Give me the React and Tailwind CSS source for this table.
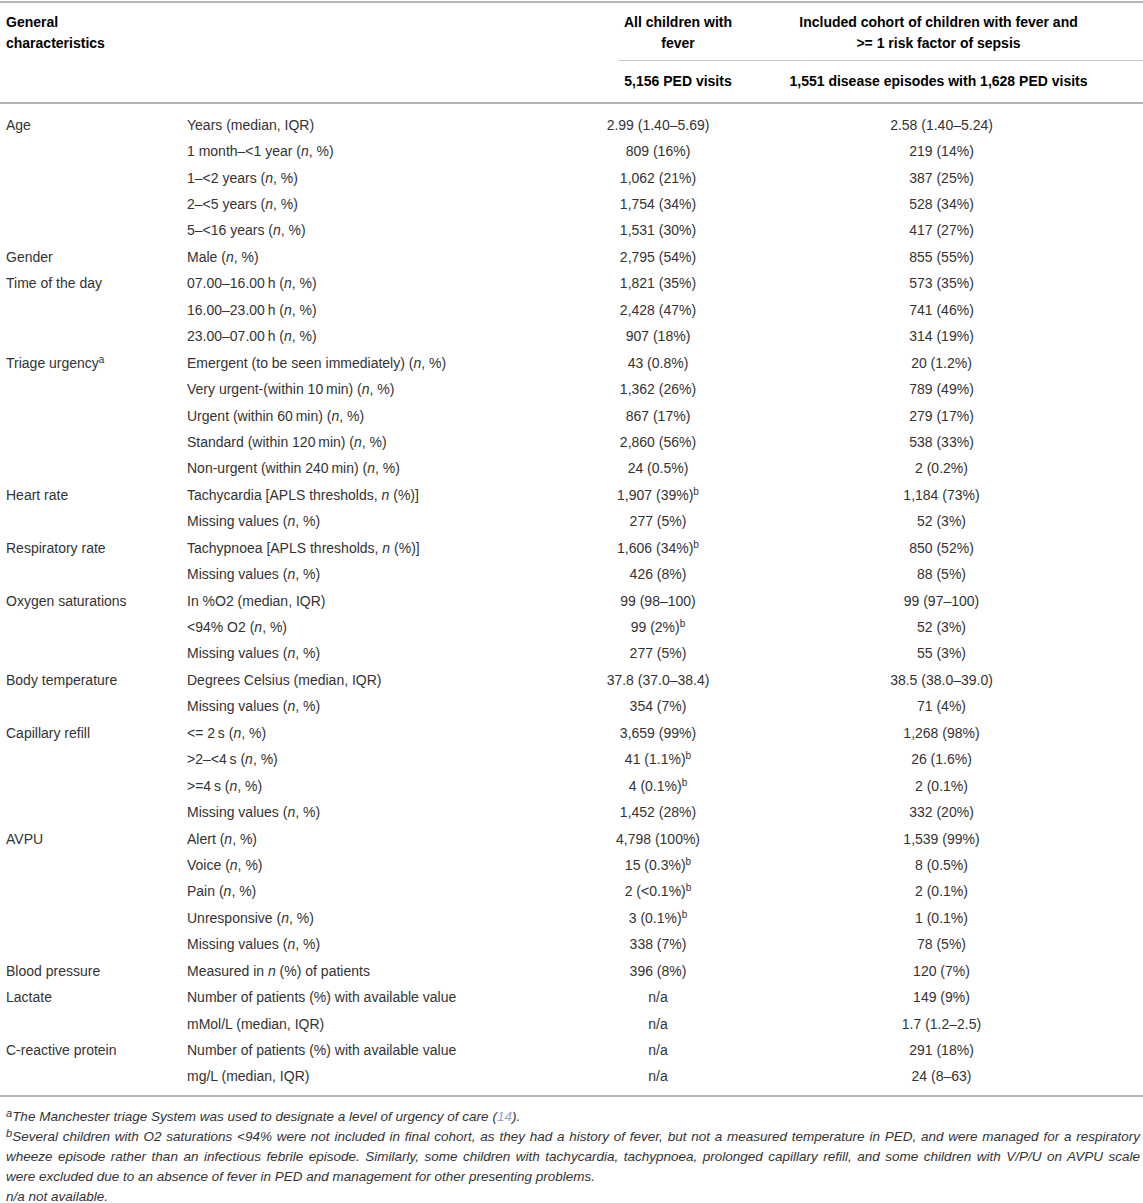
import React from "react";

// ===== DATA: table groups =====
const N = () => <i>n</i>;
const B = () => <span className="relative -top-[5px] text-[10px] leading-none">b</span>;

const GROUPS = [
  {
    label: "Age",
    rows: [
      [<>Years (median, IQR)</>, "2.99 (1.40–5.69)", "2.58 (1.40–5.24)"],
      [<>1 month–&lt;1 year (<N />, %)</>, "809 (16%)", "219 (14%)"],
      [<>1–&lt;2 years (<N />, %)</>, "1,062 (21%)", "387 (25%)"],
      [<>2–&lt;5 years (<N />, %)</>, "1,754 (34%)", "528 (34%)"],
      [<>5–&lt;16 years (<N />, %)</>, "1,531 (30%)", "417 (27%)"],
    ],
  },
  { label: "Gender", rows: [[<>Male (<N />, %)</>, "2,795 (54%)", "855 (55%)"]] },
  {
    label: "Time of the day",
    rows: [
      [<>07.00–16.00{"\u2009"}h (<N />, %)</>, "1,821 (35%)", "573 (35%)"],
      [<>16.00–23.00{"\u2009"}h (<N />, %)</>, "2,428 (47%)", "741 (46%)"],
      [<>23.00–07.00{"\u2009"}h (<N />, %)</>, "907 (18%)", "314 (19%)"],
    ],
  },
  {
    label: (
      <>
        Triage urgency<span className="relative -top-[5px] text-[10px] leading-none">a</span>
      </>
    ),
    rows: [
      [<>Emergent (to be seen immediately) (<N />, %)</>, "43 (0.8%)", "20 (1.2%)"],
      [<>Very urgent-(within 10{"\u2009"}min) (<N />, %)</>, "1,362 (26%)", "789 (49%)"],
      [<>Urgent (within 60{"\u2009"}min) (<N />, %)</>, "867 (17%)", "279 (17%)"],
      [<>Standard (within 120{"\u2009"}min) (<N />, %)</>, "2,860 (56%)", "538 (33%)"],
      [<>Non-urgent (within 240{"\u2009"}min) (<N />, %)</>, "24 (0.5%)", "2 (0.2%)"],
    ],
  },
  {
    label: "Heart rate",
    rows: [
      [<>Tachycardia [APLS thresholds, <N /> (%)]</>, <>1,907 (39%)<B /></>, "1,184 (73%)"],
      [<>Missing values (<N />, %)</>, "277 (5%)", "52 (3%)"],
    ],
  },
  {
    label: "Respiratory rate",
    rows: [
      [<>Tachypnoea [APLS thresholds, <N /> (%)]</>, <>1,606 (34%)<B /></>, "850 (52%)"],
      [<>Missing values (<N />, %)</>, "426 (8%)", "88 (5%)"],
    ],
  },
  {
    label: "Oxygen saturations",
    rows: [
      [<>In %O2 (median, IQR)</>, "99 (98–100)", "99 (97–100)"],
      [<>&lt;94% O2 (<N />, %)</>, <>99 (2%)<B /></>, "52 (3%)"],
      [<>Missing values (<N />, %)</>, "277 (5%)", "55 (3%)"],
    ],
  },
  {
    label: "Body temperature",
    rows: [
      [<>Degrees Celsius (median, IQR)</>, "37.8 (37.0–38.4)", "38.5 (38.0–39.0)"],
      [<>Missing values (<N />, %)</>, "354 (7%)", "71 (4%)"],
    ],
  },
  {
    label: "Capillary refill",
    rows: [
      [<>&lt;= 2{"\u2009"}s (<N />, %)</>, "3,659 (99%)", "1,268 (98%)"],
      [<>&gt;2–&lt;4{"\u2009"}s (<N />, %)</>, <>41 (1.1%)<B /></>, "26 (1.6%)"],
      [<>&gt;=4{"\u2009"}s (<N />, %)</>, <>4 (0.1%)<B /></>, "2 (0.1%)"],
      [<>Missing values (<N />, %)</>, "1,452 (28%)", "332 (20%)"],
    ],
  },
  {
    label: "AVPU",
    rows: [
      [<>Alert (<N />, %)</>, "4,798 (100%)", "1,539 (99%)"],
      [<>Voice (<N />, %)</>, <>15 (0.3%)<B /></>, "8 (0.5%)"],
      [<>Pain (<N />, %)</>, <>2 (&lt;0.1%)<B /></>, "2 (0.1%)"],
      [<>Unresponsive (<N />, %)</>, <>3 (0.1%)<B /></>, "1 (0.1%)"],
      [<>Missing values (<N />, %)</>, "338 (7%)", "78 (5%)"],
    ],
  },
  {
    label: "Blood pressure",
    rows: [[<>Measured in <N /> (%) of patients</>, "396 (8%)", "120 (7%)"]],
  },
  {
    label: "Lactate",
    rows: [
      [<>Number of patients (%) with available value</>, "n/a", "149 (9%)"],
      [<>mMol/L (median, IQR)</>, "n/a", "1.7 (1.2–2.5)"],
    ],
  },
  {
    label: "C-reactive protein",
    rows: [
      [<>Number of patients (%) with available value</>, "n/a", "291 (18%)"],
      [<>mg/L (median, IQR)</>, "n/a", "24 (8–63)"],
    ],
  },
];

const COLS = "grid grid-cols-[187px_429px_124px_403px]";

export default function App() {
  return (
    <div
      className="w-[1143px] bg-white text-[#333] text-[14px]"
      style={{ fontFamily: '"Liberation Sans", Arial, Helvetica, sans-serif' }}
    >
      {/* Header */}
      <div className="mt-[1px] border-t-2 border-[#b4b4b4]">
        <div className={`${COLS} h-[57px] pt-[9px] leading-[21px] font-bold text-black`}>
          <div className="pl-[6px]">
            General
            <br />
            characteristics
          </div>
          <div />
          <div className="text-center">
            All children with
            <br />
            fever
          </div>
          <div className="text-center pr-[6px]">
            Included cohort of children with fever and
            <br />
            &gt;= 1 risk factor of sepsis
          </div>
        </div>
        <div className="ml-[618px] border-t border-[#c8c8c8]" />
        <div className={`${COLS} h-[41px] items-center font-bold text-black`}>
          <div />
          <div />
          <div className="text-center">5,156 PED visits</div>
          <div className="text-center pr-[6px]">1,551 disease episodes with 1,628 PED visits</div>
        </div>
      </div>

      {/* Body */}
      <div className="border-t-2 border-[#b4b4b4] pt-[8px] pb-[5px]">
        {GROUPS.map((g, gi) =>
          g.rows.map((r, ri) => (
            <div key={`${gi}-${ri}`} className={`${COLS} h-[26.44px] items-center whitespace-nowrap`}>
              <div className="pl-[6px]">{ri === 0 ? g.label : ""}</div>
              <div>{r[0]}</div>
              <div className="text-center pr-[20px] -ml-[20px]">{r[1]}</div>
              <div className="text-center">{r[2]}</div>
            </div>
          ))
        )}
      </div>

      {/* Footnotes */}
      <div className="border-t-2 border-[#b4b4b4] pt-[10px] pl-[6px] pr-[3px] text-[13.5px] leading-[20px] italic text-[#333]">
        <p>
          <span className="relative -top-[4px] text-[11px] leading-none">a</span>The Manchester triage
          System was used to designate a level of urgency of care (
          <span className="text-[#8fa6c4]">14</span>).
        </p>
        <p>
          <span className="block text-justify [text-align-last:justify]">
            <span className="relative -top-[4px] text-[11px] leading-none">b</span>Several children with
            O2 saturations &lt;94% were not included in final cohort, as they had a history of fever, but
            not a measured temperature in PED, and were managed for a respiratory
          </span>
          <span className="block text-justify [text-align-last:justify]">
            wheeze episode rather than an infectious febrile episode. Similarly, some children with
            tachycardia, tachypnoea, prolonged capillary refill, and some children with V/P/U on AVPU scale
          </span>
          <span className="block">
            were excluded due to an absence of fever in PED and management for other presenting problems.
          </span>
        </p>
        <p>n/a not available.</p>
      </div>
    </div>
  );
}
